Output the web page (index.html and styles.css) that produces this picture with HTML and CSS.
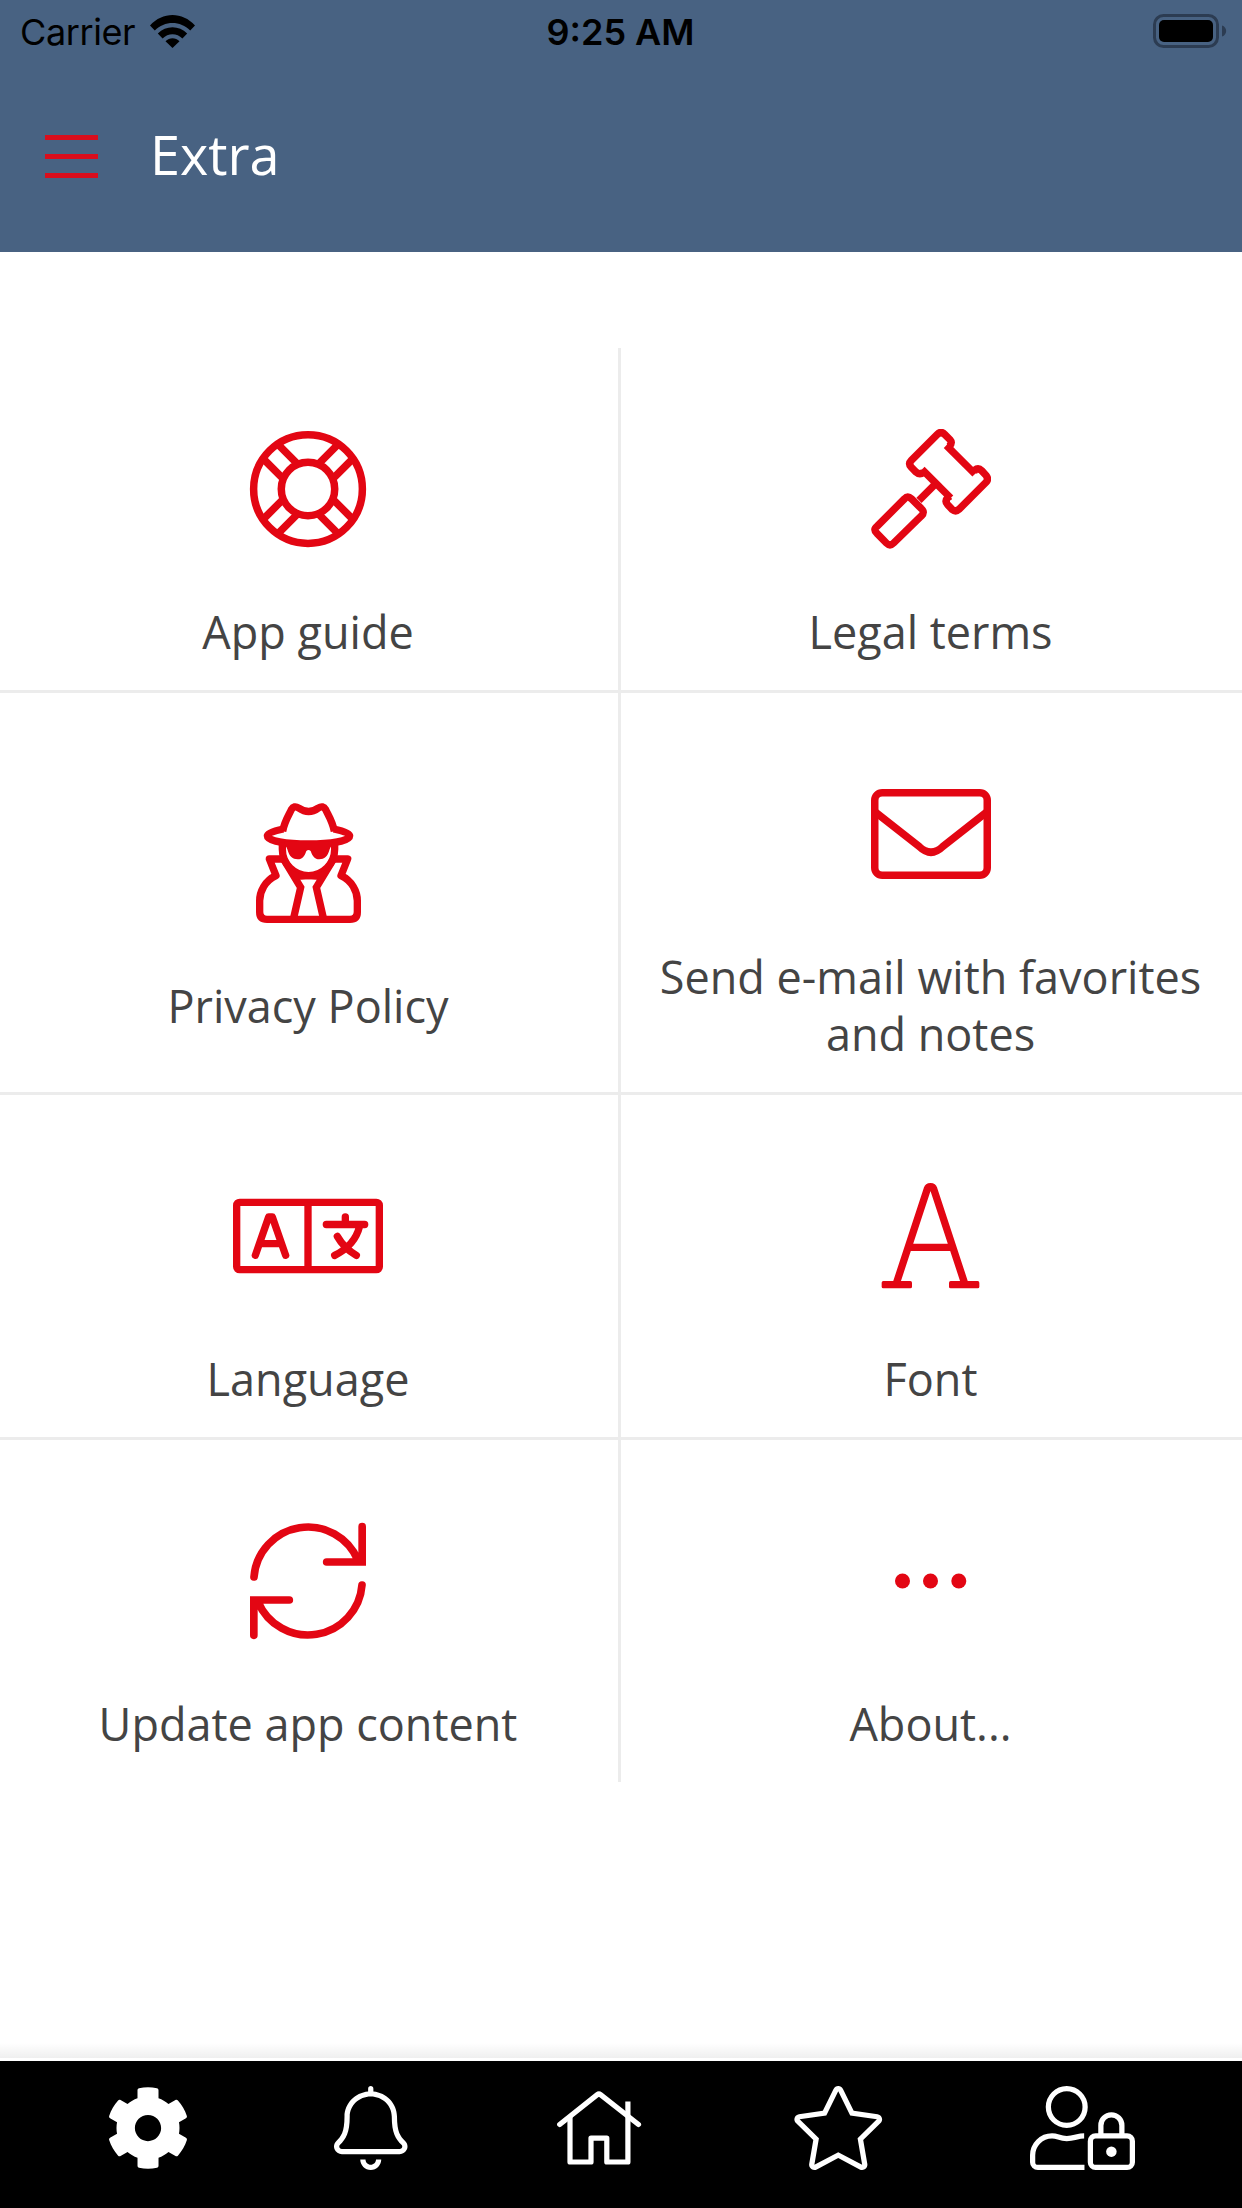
FILE: index.html
```html
<!DOCTYPE html>
<html lang="en">
<head>
    <meta charset="UTF-8">
    <meta name="viewport" content="width=device-width, initial-scale=1.0">
    <title>Extra</title>
    <link rel="stylesheet" href="styles.css">
</head>
<body>
    <header class="header">
        <div class="status-bar">
            <div class="carrier">
                <span>Carrier</span>
                <svg class="wifi" viewBox="0 0 45 33">
                    <path d="M0 10.5C12.5-3.5 32.5-3.5 45 10.5L40.2 15.5C30.5 5.5 14.5 5.5 4.8 15.5Z"/>
                    <path d="M7.8 18.5C16 10 29 10 37.2 18.5L32.4 23.4C27 17.7 18 17.7 12.6 23.4Z"/>
                    <path d="M15.5 26.3C19.5 22.3 25.5 22.3 29.5 26.3L22.5 33Z"/>
                </svg>
            </div>
            <div class="time">9:25 AM</div>
            <svg class="battery" viewBox="0 0 74 34">
                <rect class="shell" x="1.5" y="1.5" width="63" height="31" rx="9"/>
                <rect x="6" y="6" width="54" height="22" rx="5"/>
                <path class="cap" d="M69 11.5C74.5 13 74.5 21 69 22.5Z"/>
            </svg>
        </div>
        <div class="title-bar">
            <div class="menu-button">
                <span></span>
                <span></span>
                <span></span>
            </div>
            <h1>Extra</h1>
        </div>
    </header>

    <main class="grid">
        <div class="cell">
            <svg class="icon" viewBox="-256 -256 512 512" stroke-width="32">
                <circle r="232"/>
                <circle r="114"/>
                <path d="M105-44H228M105 44H228M-105-44H-228M-105 44H-228M-44 105V228M44 105V228M-44-105V-228M44-105V-228" transform="rotate(45)"/>
            </svg>
            <div class="label">App guide</div>
        </div>
        <div class="cell">
            <!-- gavel: head, neck, handle -->
            <svg class="icon" viewBox="213 87 360 360" stroke-width="22">
                <path d="M440 137L448 139Q458 128 450 119L434 103Q423 92 412 103L334 181Q324 191 334 202L348 216Q359 226 371 217L372 210"/>
                <path d="M439 136L525 222"/>
                <path d="M521 218L523 211Q535 202 545 212L558 226Q567 237 558 247L477 328Q467 337 456 328L443 314Q433 303 444 292L451 288"/>
                <path d="M366 208L452 294"/>
                <path d="M405 253L357 301"/>
                <path d="M231 379L314 296Q323 286 334 296L364 326Q376 337 364 348L281 429Q270 440 259 429L231 400Q218 389 231 379Z"/>
            </svg>
            <div class="label">Legal terms</div>
        </div>
        <div class="cell">
            <svg class="icon icon-spy" viewBox="318 69 315 360" stroke-width="22">
                <path d="M398 154C404 122 418 103 424 89Q432 75 446 84C466 98 486 98 505 84Q519 75 527 89C533 103 547 122 553 154"/>
                <path d="M400 147C370 153 352 160 352 167C352 183 410 192 475.5 192C541 192 599 183 599 167C599 160 581 153 551 147"/>
                <path d="M397 188V208A78.5 79 0 0 0 554 208V188"/>
                <path class="solid" d="M402 185L412 208C418 230 428 238 443 238C458 238 464 228 469 213Q475.5 207 482 213C487 228 494 238 508 238C523 238 533 230 539 208L549 185Z"/>
                <path stroke-linejoin="round" d="M397 237H358L378 287C345 302 329 335 329 362V396Q329 418 351 418H600Q622 418 622 396V362C622 335 606 302 573 287L593 237H554"/>
                <path d="M398 233L452 322L430 418M553 233L499 322L521 418"/>
                <path class="solid" d="M395 225L412 272L441 300L475.5 298L510 300L539 272L556 225L530 270L475.5 290L421 270Z"/>
            </svg>
            <div class="label">Privacy Policy</div>
        </div>
        <div class="cell">
            <svg class="icon" viewBox="0 0 512 512" stroke-width="32">
                <rect x="16" y="80" width="480" height="352" rx="32"/>
                <path d="M18 162L206 310Q256 358 306 310L494 162"/>
            </svg>
            <div class="label">Send e-mail with favorites and notes</div>
        </div>
        <div class="cell">
            <svg class="icon icon-language" viewBox="129 18 450 360" stroke-width="22">
                <rect x="140" y="97" width="428" height="202" rx="9"/>
                <path d="M354 97V299"/>
                <g stroke-width="22" stroke-linecap="round" stroke-linejoin="round">
                    <path d="M196 256L236 141H247L287 256M212 221H271"/>
                    <path d="M409 163.500H524M466 141V160M509 168C500 205 475 236 434 256M442 199C455 222 475 242 499 256"/>
                </g>
            </svg>
            <div class="label">Language</div>
        </div>
        <div class="cell">
            <svg class="icon icon-font" viewBox="117 48 315 360" stroke-width="22">
                <path d="M172 370L265 87Q267 80 274.5 80Q282 80 284 87L377 370M208 262H341"/>
                <rect class="solid" x="128" y="363" width="91" height="22" rx="5"/>
                <rect class="solid" x="330" y="363" width="91" height="22" rx="5"/>
            </svg>
            <div class="label">Font</div>
        </div>
        <div class="cell">
            <svg class="icon" viewBox="507 63 360 360" stroke-width="23" stroke-linecap="round">
                <path d="M525 231A162.5 162.5 0 0 1 837 181M849.5 80V186H743"/>
                <path d="M849 255A162.5 162.5 0 0 1 537 305M524.5 406V300H631"/>
            </svg>
            <div class="label">Update app content</div>
        </div>
        <div class="cell">
            <svg class="icon" viewBox="0 0 120 120">
                <g class="solid">
                    <circle cx="31.5" cy="60" r="7.5"/>
                    <circle cx="59.5" cy="60" r="7.5"/>
                    <circle cx="87.8" cy="60" r="7.5"/>
                </g>
            </svg>
            <div class="label">About...</div>
        </div>
    </main>

    <nav class="tab-bar">
        <svg class="tab" viewBox="0 0 512 512">
            <path d="M487.4 315.7l-42.6-24.6c4.3-23.2 4.3-47 0-70.2l42.6-24.6c4.9-2.8 7.1-8.6 5.5-14-11.1-35.6-30-67.8-54.7-94.6-3.8-4.1-10-5.1-14.8-2.3L380.8 110c-17.9-15.4-38.5-27.3-60.8-35.1V25.8c0-5.6-3.9-10.5-9.4-11.7-36.7-8.2-74.3-7.8-109.2 0-5.5 1.2-9.4 6.1-9.4 11.7V75c-22.2 7.9-42.8 19.8-60.8 35.1L88.7 85.5c-4.9-2.8-11-1.9-14.8 2.3-24.7 26.7-43.6 58.9-54.7 94.6-1.7 5.4.6 11.2 5.5 14L67.3 221c-4.3 23.2-4.3 47 0 70.2l-42.6 24.6c-4.9 2.8-7.1 8.6-5.5 14 11.1 35.6 30 67.8 54.7 94.6 3.8 4.1 10 5.1 14.8 2.3l42.6-24.6c17.9 15.4 38.5 27.3 60.8 35.1v49.2c0 5.6 3.9 10.5 9.4 11.7 36.7 8.2 74.3 7.8 109.2 0 5.5-1.2 9.4-6.1 9.4-11.7v-49.2c22.2-7.9 42.8-19.8 60.8-35.1l42.6 24.6c4.9 2.8 11 1.9 14.8-2.3 24.7-26.7 43.6-58.9 54.7-94.6 1.5-5.5-.7-11.3-5.6-14.1zM256 336c-44.1 0-80-35.9-80-80s35.9-80 80-80 80 35.9 80 80-35.9 80-80 80z"/>
        </svg>
        <svg class="tab" viewBox="0 0 448 512">
            <path d="M224 480c-17.66 0-32-14.38-32-32.03h-32c0 35.31 28.72 64.03 64 64.03s64-28.72 64-64.03h-32c0 17.65-14.34 32.03-32 32.03zm209.38-145.19c-27.96-26.62-49.34-54.48-49.34-148.91 0-79.59-63.39-144.5-144.04-152.35V16c0-8.84-7.16-16-16-16s-16 7.16-16 16v17.56C127.35 41.41 63.96 106.31 63.96 185.9c0 94.42-21.39 122.29-49.35 148.91-13.97 13.3-18.38 33.41-11.25 51.23C10.64 404.24 28.16 416 48 416h352c19.84 0 37.36-11.77 44.64-29.97 7.13-17.82 2.71-37.92-11.26-51.22zM400 384H48c-14.23 0-21.34-16.47-11.32-26.01 34.86-33.19 59.28-70.34 59.28-172.08C95.96 118.53 153.23 64 224 64c70.76 0 128.04 54.52 128.04 121.9 0 101.35 24.21 138.7 59.28 172.08C421.38 367.57 414.17 384 400 384z"/>
        </svg>
        <svg class="tab line" viewBox="-5 0 94.5 84" stroke-width="5.2" stroke-linejoin="round">
            <path stroke-linecap="round" d="M2.7 38.5L40.3 8.6Q41.9 7.4 43.5 8.6L81.5 38.5"/>
            <path d="M13 30V76H34V52.2H49.8V76H70.9V15.5"/>
        </svg>
        <svg class="tab" viewBox="0 0 576 512">
            <path d="M528.1 171.5L382 150.2 316.7 17.8c-11.7-23.6-45.6-23.9-57.4 0L194 150.2 47.9 171.5c-26.2 3.8-36.7 36.1-17.7 54.6l105.7 103-25 145.5c-4.5 26.3 23.2 46 46.4 33.7L288 439.6l130.7 68.7c23.2 12.2 50.9-7.4 46.4-33.7l-25-145.5 105.7-103c19-18.5 8.5-50.8-17.7-54.6zM405.8 317.9l27.8 162L288 403.5 142.5 480l27.8-162L52.5 203.1l162.7-23.6L288 32l72.8 147.5 162.7 23.6-117.7 114.8z"/>
        </svg>
        <svg class="tab line" viewBox="0 0 640 512" stroke-width="32">
            <circle cx="224" cy="128" r="112"/>
            <path d="M330 304C290 304 270 320 224 320S170 304 134.4 304C69 304 16 357 16 422.4V464C16 481.7 30.3 496 48 496H332"/>
            <rect x="368" y="304" width="256" height="192" rx="32"/>
            <path d="M432 304V240A64 64 0 0 1 560 240V304"/>
            <circle class="dot" cx="496" cy="400" r="32"/>
        </svg>
    </nav>
</body>
</html>
```

FILE: styles.css
```css
* {
    box-sizing: border-box;
}

body {
    margin: 0;
    height: 2208px;
    display: flex;
    flex-direction: column;
    background-color: #fff;
    color: #444;
    font-family: 'Open Sans', sans-serif;
}

svg {
    display: block;
    flex: none;
}

.header {
    height: 252px;
    background-color: #486282;
}

.status-bar {
    height: 60px;
    padding: 0 15px 0 20px;
    display: grid;
    grid-template-columns: 1fr auto 1fr;
    align-items: center;
    color: #000;
    font-family: Inter, sans-serif;
    font-size: 36px;
    line-height: 60px;
}

.carrier {
    display: flex;
    align-items: center;
    gap: 15px;
    letter-spacing: -0.4px;
}

.carrier span,
.time {
    padding-top: 2px;
}

.wifi {
    width: 45px;
    height: 33px;
}

.time {
    margin: 0 3px 0 -3px;
    font-weight: 600;
}

.battery {
    width: 74px;
    height: 34px;
    justify-self: end;
}

.battery .shell {
    fill: none;
    stroke: #2c3c52;
    stroke-width: 3;
}

.battery .cap {
    fill: #2c3c52;
}

.title-bar {
    height: 192px;
    padding: 0 45px;
    display: flex;
    align-items: flex-start;
}

.menu-button {
    width: 53px;
    margin-top: 75px;
    display: flex;
    flex-direction: column;
    gap: 14px;
}

.menu-button span {
    height: 5px;
    background-color: #d90d1c;
}

h1 {
    margin: 57px 0 0 52px;
    color: #fff;
    font-size: 54px;
    font-weight: 400;
    line-height: 74px;
}

.grid {
    flex: 1;
    padding-top: 96px;
    display: grid;
    grid-template-columns: 621px 621px;
    grid-template-rows: 345px 402px 345px 342px;
}

.cell {
    padding: 50px 31px 0 29px;
    display: flex;
    flex-direction: column;
    align-items: center;
    justify-content: center;
    border-bottom: 3px solid #ececec;
}

.cell:nth-child(odd) {
    border-right: 3px solid #ececec;
}

.cell:nth-last-child(-n+2) {
    border-bottom: none;
}

.icon {
    width: 120px;
    height: 120px;
    fill: none;
    stroke: #e30613;
}

.icon-spy,
.icon-font {
    width: 105px;
}

.icon-language {
    width: 150px;
}

.icon .solid {
    fill: #e30613;
    stroke: none;
}

.label {
    margin: 54px 0 -1px;
    font-size: 45px;
    line-height: 57px;
    text-align: center;
}

.tab-bar {
    position: relative;
    height: 147px;
    padding: 25px 107px 0 106px;
    display: flex;
    justify-content: space-between;
    background-color: #000;
}

/* soft shadow above the bar */
.tab-bar::before {
    content: "";
    position: absolute;
    left: 0;
    right: 0;
    bottom: 150px;
    height: 15px;
    background: linear-gradient(#fff, #efefef);
}

.tab {
    height: 84px;
    fill: #fff;
}

.line {
    fill: none;
    stroke: #fff;
}

.line .dot {
    fill: #fff;
    stroke: none;
}
```
